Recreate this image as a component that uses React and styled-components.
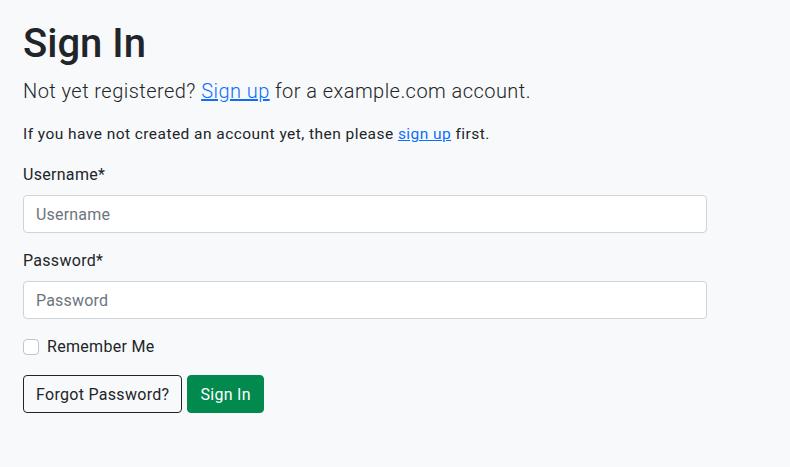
import styled, { createGlobalStyle } from "styled-components";

const Global = createGlobalStyle`
  * { box-sizing: border-box; }
  html, body {
    margin: 0;
    background: #f8f9fa;
    color: #212529;
    font-family: Roboto, "Liberation Sans", sans-serif;
  }
`;

const Page = styled.main`
  padding: 20px 23px 40px;
  width: 730px;
`;

const Title = styled.h1`
  margin: 0 0 8px;
  font: 500 40px/48px Roboto, sans-serif;
`;

const Lead = styled.p`
  margin: 0 0 16px;
  font: 300 20px/30px Roboto, sans-serif;
  letter-spacing: 0.45px;
`;

const Note = styled.p`
  margin: 0 0 17px;
  font: 400 15.5px/24px Roboto, sans-serif;
  letter-spacing: 0.45px;
`;

const Link = styled.a`
  color: #0d6efd;
  text-decoration: underline;
`;

const Field = styled.div`
  margin-bottom: 16px;
  display: flex;
  flex-direction: column;
`;

const Label = styled.label`
  font: 400 16px/24px Roboto, sans-serif;
  letter-spacing: 0.3px;
  margin-bottom: 8px;
`;

const Input = styled.input`
  width: 684px;
  height: 38px;
  padding: 6px 12px;
  border: 1px solid #ced4da;
  border-radius: 4px;
  background: #fff;
  font: 400 16px Roboto, sans-serif;
  letter-spacing: 0.2px;
  color: #212529;
  &::placeholder { color: #6c757d; }
`;

const Check = styled.label`
  display: flex;
  align-items: center;
  gap: 8px;
  font: 400 16px/24px Roboto, sans-serif;
  letter-spacing: 0.3px;
  margin-bottom: 16px;
`;

const Box = styled.span`
  width: 16px;
  height: 16px;
  border: 1px solid #bfc5cb;
  border-radius: 4px;
  background: #fff;
`;

const Actions = styled.div`
  display: flex;
  gap: 5px;
`;

const Button = styled.button`
  height: 38px;
  padding: 0 12px;
  border-radius: 4px;
  font: 400 16px Roboto, sans-serif;
  letter-spacing: 0.3px;
  border: 1px solid ${p => (p.$primary ? "#028a4e" : "#212529")};
  background: ${p => (p.$primary ? "#028a4e" : "transparent")};
  color: ${p => (p.$primary ? "#fff" : "#212529")};
`;

export default function App() {
  return (
    <>
      <Global />
      <Page>
        <Title>Sign In</Title>
        <Lead>
          Not yet registered? <Link href="#">Sign up</Link> for a example.com account.
        </Lead>
        <Note>
          If you have not created an account yet, then please <Link href="#">sign up</Link> first.
        </Note>
        <Field>
          <Label>Username*</Label>
          <Input placeholder="Username" />
        </Field>
        <Field>
          <Label>Password*</Label>
          <Input type="password" placeholder="Password" />
        </Field>
        <Check>
          <Box />
          Remember Me
        </Check>
        <Actions>
          <Button>Forgot Password?</Button>
          <Button $primary>Sign In</Button>
        </Actions>
      </Page>
    </>
  );
}
